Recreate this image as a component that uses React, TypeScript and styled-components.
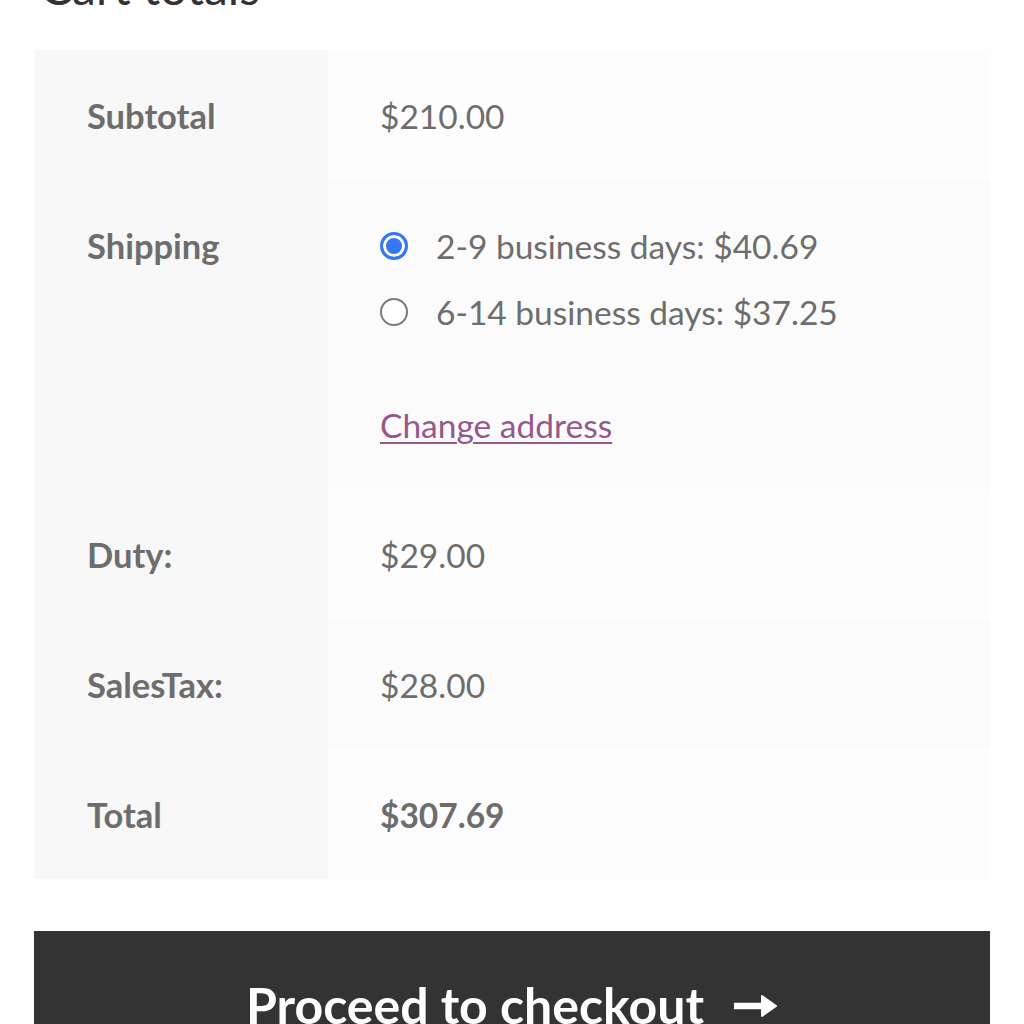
import React from "react";
import styled, { createGlobalStyle } from "styled-components";

const Global = createGlobalStyle`
  html, body { margin: 0; padding: 0; background: #ffffff; }
  body { font-family: "Lato", "Open Sans", sans-serif; color: #6d6d6d; overflow: hidden; }
`;

const Page = styled.div`
  width: 956px;
  padding: 0 34px;
  height: 1024px;
  overflow: hidden;
`;

const Heading = styled.h2`
  margin: -37px 0 0 6px;
  font-size: 48px;
  line-height: 47px;
  font-weight: 400;
  color: #333333;
  height: 50px;
  box-sizing: border-box;
`;

const Table = styled.table`
  width: 100%;
  border-collapse: collapse;
  border-spacing: 0;
  margin-top: 37px;
`;

const Row = styled.tr<{ $even?: boolean }>`
  td { background: ${(p) => (p.$even ? "#fbfbfb" : "#fdfdfd")}; }
`;

const Label = styled.th`
  width: 294px;
  box-sizing: border-box;
  background: #f8f8f8;
  text-align: left;
  vertical-align: top;
  padding: 49px 20px 47px 53px;
  font-size: 34.5px;
  line-height: 34px;
  font-weight: 700;
  color: #6d6d6d;
`;

const Value = styled.td<{ $strong?: boolean }>`
  text-align: left;
  vertical-align: top;
  padding: 49px 40px 47px 52px;
  font-size: 33.5px;
  line-height: 34px;
  font-weight: ${(p) => (p.$strong ? 700 : 400)};
  color: #6d6d6d;
`;

const MethodList = styled.ul`
  list-style: none;
  margin: 0;
  padding: 0;
  display: flex;
  flex-direction: column;
  gap: 32px;
`;

const Method = styled.li`
  display: flex;
  align-items: center;
  gap: 28px;
`;

const Radio = styled.span<{ $checked?: boolean }>`
  width: 28px;
  height: 28px;
  box-sizing: border-box;
  border-radius: 50%;
  flex: none;
  border: ${(p) => (p.$checked ? "3px solid #3478f6" : "2px solid #7a7a7a")};
  background: ${(p) => (p.$checked ? "#3478f6" : "#ffffff")};
  box-shadow: ${(p) => (p.$checked ? "inset 0 0 0 3px #ffffff" : "none")};
`;

const ChangeLink = styled.a`
  display: inline-block;
  margin-top: 79px;
  color: #96588a;
  text-decoration: underline;
  text-decoration-thickness: 2px;
  text-underline-offset: 4px;
`;

const CheckoutButton = styled.button`
  margin-top: 52px;
  width: 100%;
  height: 150px;
  border: 0;
  background: #333333;
  color: #ffffff;
  font-family: "Lato", "Open Sans", sans-serif;
  font-size: 50px;
  font-weight: 700;
  display: flex;
  align-items: flex-start;
  justify-content: center;
  gap: 28px;
  padding-top: 44px;
  box-sizing: border-box;
`;

const ArrowIcon = styled.svg`
  flex: none;
  margin-top: 16px;
`;

const Arrow = () => (
  <ArrowIcon width="46" height="30" viewBox="0 0 46 30">
    <path d="M2 15 H32" stroke="#fff" strokeWidth="6.5" strokeLinecap="butt" />
    <path d="M30 5 L44 15 L30 25 Z" fill="#fff" stroke="#fff" strokeWidth="2" strokeLinejoin="round" />
  </ArrowIcon>
);

export default function App() {
  return (
    <>
      <Global />
      <Page>
        <Heading>Cart totals</Heading>
        <Table>
          <tbody>
            <Row>
              <Label>Subtotal</Label>
              <Value>$210.00</Value>
            </Row>
            <Row $even>
              <Label>Shipping</Label>
              <Value>
                <MethodList>
                  <Method>
                    <Radio $checked />
                    <span>2-9 business days: $40.69</span>
                  </Method>
                  <Method>
                    <Radio />
                    <span>6-14 business days: $37.25</span>
                  </Method>
                </MethodList>
                <ChangeLink href="#">Change address</ChangeLink>
              </Value>
            </Row>
            <Row>
              <Label>Duty:</Label>
              <Value>$29.00</Value>
            </Row>
            <Row $even>
              <Label>SalesTax:</Label>
              <Value>$28.00</Value>
            </Row>
            <Row>
              <Label>Total</Label>
              <Value $strong>$307.69</Value>
            </Row>
          </tbody>
        </Table>
        <CheckoutButton>
          <span>Proceed to checkout</span>
          <Arrow />
        </CheckoutButton>
      </Page>
    </>
  );
}
